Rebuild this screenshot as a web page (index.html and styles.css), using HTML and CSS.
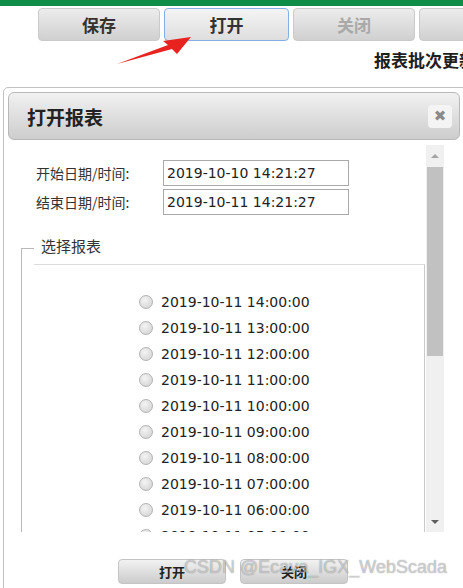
FILE: index.html
```html
<!DOCTYPE html>
<html lang="zh-CN">
  <head>
    <meta charset="UTF-8" />
    <meta name="viewport" content="width=device-width, initial-scale=1.0" />
    <title>打开报表</title>
    <link rel="stylesheet" href="styles.css">
  </head>
  <body>
    <div class="topbar"></div>

    <div class="toolbar">
      <button class="tool-button">保存</button>
      <button class="tool-button active">打开</button>
      <button class="tool-button disabled">关闭</button>
      <button class="tool-button disabled">刷新</button>
    </div>
    <div class="page-title">报表批次更新</div>

    <!-- annotation arrow pointing at the open button -->
    <svg class="pointer" width="463" height="100" viewBox="0 0 463 100">
      <polygon
        points="191,37 163,41 168,45 117,64 172,49 177,54"
        fill="#e8231f"
      />
    </svg>

    <div class="dialog">
      <div class="dialog-header">
        <h1>打开报表</h1>
        <span class="close-button">✖</span>
      </div>

      <div class="dialog-body">
        <div class="scroll-content">
          <div class="form-row">
            <label class="form-label">开始日期/时间:</label>
            <input class="text-input" type="text" value="2019-10-10 14:21:27" />
          </div>
          <div class="form-row">
            <label class="form-label">结束日期/时间:</label>
            <input class="text-input" type="text" value="2019-10-11 14:21:27" />
          </div>

          <div class="picker">
            <div class="picker-title">
              <span class="corner"></span>
              <span class="legend">选择报表</span>
            </div>
            <div class="picker-body">
              <div class="report-list">
                <label class="report-item"><input type="radio" name="report" /><span>2019-10-11 14:00:00</span></label>
                <label class="report-item"><input type="radio" name="report" /><span>2019-10-11 13:00:00</span></label>
                <label class="report-item"><input type="radio" name="report" /><span>2019-10-11 12:00:00</span></label>
                <label class="report-item"><input type="radio" name="report" /><span>2019-10-11 11:00:00</span></label>
                <label class="report-item"><input type="radio" name="report" /><span>2019-10-11 10:00:00</span></label>
                <label class="report-item"><input type="radio" name="report" /><span>2019-10-11 09:00:00</span></label>
                <label class="report-item"><input type="radio" name="report" /><span>2019-10-11 08:00:00</span></label>
                <label class="report-item"><input type="radio" name="report" /><span>2019-10-11 07:00:00</span></label>
                <label class="report-item"><input type="radio" name="report" /><span>2019-10-11 06:00:00</span></label>
                <label class="report-item"><input type="radio" name="report" /><span>2019-10-11 05:00:00</span></label>
                <label class="report-item"><input type="radio" name="report" /><span>2019-10-11 04:00:00</span></label>
              </div>
            </div>
          </div>
        </div>

        <div class="scrollbar">
          <div class="scroll-arrow up"></div>
          <div class="scroll-thumb"></div>
          <div class="scroll-track"></div>
          <div class="scroll-arrow down"></div>
        </div>
      </div>

      <div class="dialog-footer">
        <button class="dialog-button">打开</button>
        <button class="dialog-button">关闭</button>
      </div>
    </div>

    <div class="watermark">CSDN @Ecava_IGX_WebScada</div>
  </body>
</html>
```

FILE: styles.css
```css
:root {
  --green: #0e8c48;
  --border: #b9b9b9;
  --text-color: #222;
  --label-color: #333;
  --cjk: "Noto Sans CJK SC", sans-serif;
  --latin: "DejaVu Sans", "Noto Sans CJK SC", sans-serif;
}

* {
  margin: 0;
  padding: 0;
  box-sizing: border-box;
}

body {
  width: 463px;
  height: 588px;
  overflow: hidden;
  position: relative;
  background: #fff;
  font-family: var(--cjk);
  color: var(--text-color);
}

.topbar {
  height: 6px;
  background: var(--green);
}

.toolbar {
  display: flex;
  gap: 4px;
  margin-top: 2px;
  padding-left: 38px;
  white-space: nowrap;
}

.tool-button {
  flex: none;
  width: 122px;
  height: 33px;
  border: 1px solid #cacaca;
  border-radius: 4px;
  background: linear-gradient(#ececec, #d0d0d0);
  font-family: var(--cjk);
  font-size: 17px;
  font-weight: 700;
  line-height: 31px;
  color: #333;
}

.tool-button.active {
  width: 125px;
  border-color: #86aee6;
  background: linear-gradient(#f4f4f4, #dedede);
}

.tool-button.disabled {
  color: #a9a9a9;
}

.page-title {
  margin-top: 8px;
  height: 22px;
  padding-left: 374px;
  font-size: 17px;
  font-weight: 700;
  line-height: 22px;
  white-space: nowrap;
  color: #1e1e1e;
}

.pointer {
  position: absolute;
  top: 0;
  left: 0;
  pointer-events: none;
}

.dialog {
  width: 480px;
  margin: 16px 0 0 3px;
  padding: 4px;
  border: 1px solid #c2c2c2;
  border-radius: 5px 0 0 0;
  background: #fff;
}

.dialog-header {
  display: flex;
  align-items: center;
  justify-content: space-between;
  width: 452px;
  height: 48px;
  padding: 0 7px 0 18px;
  border: 1px solid #b8b8b8;
  border-radius: 6px;
  background: linear-gradient(#f1f1f1, #cdcdcd);
}

.dialog-header h1 {
  font-size: 19px;
  font-weight: 700;
  color: #222;
}

.close-button {
  width: 24px;
  height: 23px;
  border-radius: 4px;
  background: #f4f4f4;
  color: #8a8a8a;
  font-family: "DejaVu Sans", sans-serif;
  font-size: 15px;
  font-weight: 700;
  line-height: 23px;
  text-align: center;
}

.dialog-body {
  display: flex;
  height: 387px;
  margin-top: 5px;
  overflow: hidden;
}

.scroll-content {
  width: 418px;
  padding: 15px 0 0 28px;
}

.form-row {
  display: flex;
  align-items: center;
  height: 26px;
  margin-bottom: 3px;
}

.form-label {
  width: 127px;
  font-size: 14px;
  color: var(--label-color);
}

.text-input {
  width: 186px;
  height: 26px;
  padding: 0 3px;
  border: 1px solid #a9a9a9;
  font-family: var(--latin);
  font-size: 14px;
  color: var(--text-color);
  outline: none;
}

.picker {
  width: 404px;
  margin: 21px 0 0 -15px;
}

.picker-title {
  display: flex;
  align-items: center;
  height: 20px;
}

.corner {
  align-self: flex-end;
  width: 13px;
  height: 8px;
  border-top: 1px solid var(--border);
  border-left: 1px solid var(--border);
}

.legend {
  margin-left: 7px;
  font-size: 15px;
  line-height: 20px;
  color: var(--label-color);
}

.picker-body {
  border-left: 1px solid var(--border);
  padding-top: 8px;
}

.report-list {
  display: flex;
  flex-direction: column;
  margin-left: 12px;
  padding: 24px 0 0 105px;
  border-top: 1px solid #dcdcdc;
  border-right: 1px solid #c9c9c9;
}

.report-item {
  display: flex;
  align-items: center;
  gap: 8px;
  height: 26px;
  font-family: var(--latin);
  font-size: 14px;
  color: var(--text-color);
}

.report-item input {
  appearance: none;
  width: 14px;
  height: 14px;
  border: 1px solid #b3b3b3;
  border-radius: 50%;
  background: radial-gradient(circle at 40% 35%, #f4f4f4, #cfcfcf);
}

.scrollbar {
  display: flex;
  flex-direction: column;
  width: 18px;
  background: #f0f0f0;
}

.scroll-arrow {
  height: 21px;
  display: flex;
  align-items: center;
  justify-content: center;
}

.scroll-arrow::before {
  content: "";
  border-left: 4px solid transparent;
  border-right: 4px solid transparent;
}

.scroll-arrow.up::before {
  border-bottom: 4px solid #a3a3a3;
}

.scroll-arrow.down::before {
  border-top: 4px solid #5f5f5f;
}

.scroll-thumb {
  height: 189px;
  margin: 1px 1px 0;
  background: #c1c1c1;
}

.scroll-track {
  flex: 1;
}

.dialog-footer {
  display: flex;
  gap: 14px;
  padding: 27px 0 0 110px;
}

.dialog-button {
  width: 108px;
  height: 25px;
  border: 1px solid #c4c4c4;
  border-radius: 4px;
  background: linear-gradient(#f2f2f2, #cccccc);
  font-family: var(--cjk);
  font-size: 13px;
  font-weight: 700;
  color: #222;
}

.watermark {
  position: absolute;
  left: 184px;
  top: 557px;
  font-family: "Liberation Sans", sans-serif;
  font-size: 18px;
  color: rgba(255, 255, 255, 0.55);
  text-shadow: 0 0 1px rgba(0, 0, 0, 0.5);
  white-space: nowrap;
  pointer-events: none;
}
```
